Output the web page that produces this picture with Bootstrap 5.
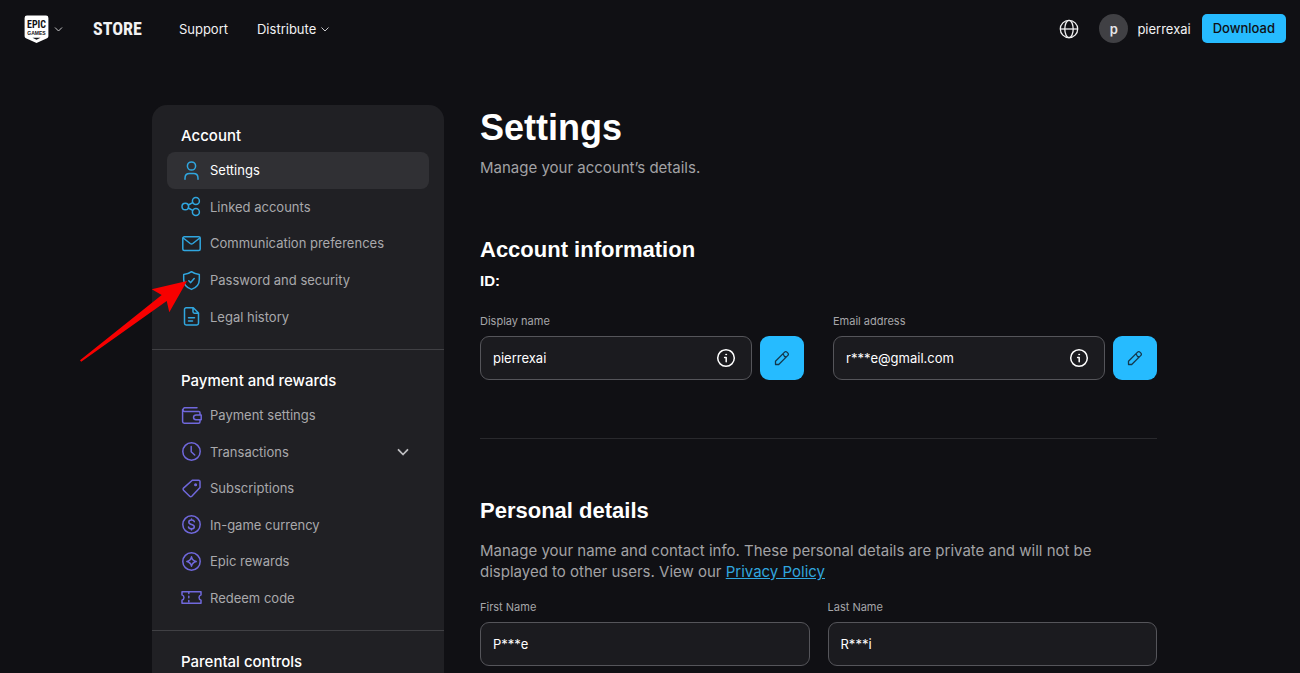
<!DOCTYPE html>
<html lang="en" data-bs-theme="dark">
<head>
<meta charset="utf-8">
<meta name="viewport" content="width=device-width, initial-scale=1">
<title>Account settings</title>
<link href="https://cdn.jsdelivr.net/npm/bootstrap@5.3.0/dist/css/bootstrap.min.css" rel="stylesheet">
<style>
  body { background: #101014; color: #fff; font-family: Inter, "Open Sans", sans-serif; font-size: 13px; line-height: 20px; }
  a { text-decoration: none; }
  svg { display: block; flex: none; }
  .topbar { padding: 13px 14px 13px 24px; min-height: 57px; }
  .topbar a, .topbar .menu-btn { color: #f2f2f3; }
  .menu-btn { background: none; border: 0; padding: 0; display: flex; align-items: center; }
  .brand-text { font: 700 18px/30px "Liberation Sans Narrow", "Roboto Condensed", "Liberation Sans", sans-serif; margin: 0 37px 0 29px; }
  .avatar { width: 29px; height: 29px; background: #404044; font-weight: 600; color: #e6e6e8; }
  .user-link { gap: 9px; margin: 0 11px 0 20px; }
  .btn-blue { background: #26bbff; color: #101014; border: 0; font-weight: 500; --bs-btn-hover-bg: #61cdff; --bs-btn-hover-color: #101014; }
  .btn-download { font-size: 13px; line-height: 19px; padding: 5px 11px; border-radius: 5px; }
  .shell { max-width: 1020px; padding: 48px 3px 0 12px; gap: 36px; }
  .side { width: 292px; background: #202024; border-radius: 15px 15px 0 0; }
  .side section { padding: 21px 15px 14px; }
  .side section + section { border-top: 1px solid #404044; }
  .side section:last-child { padding-bottom: 0; }
  .side h2 { font-size: 15px; line-height: 20px; font-weight: 500; margin: 0 0 6px; padding-left: 14px; }
  .side section:last-of-type { padding-bottom: 0; }
  .side section:last-of-type h2 { margin-bottom: 0; }
  .side ul { margin: 0; }
  .side .list-five { min-height: 183px; }
  .side .list-six { min-height: 219px; }
  .side li a { padding: 0 19px 0 14px; gap: 8px; border-radius: 8px; color: #a9a9ac; }
  .side li a.active { background: #303034; color: #fff; }
  .ic-blue { color: #30a6df; }
  .ic-violet { color: #7068dc; }
  .ic { width: 21px; height: 21px; fill: none; stroke: currentColor; stroke-width: 1.5; stroke-linecap: round; stroke-linejoin: round; }
  .pointer { left: -72px; top: 175px; pointer-events: none; }
  main { min-width: 0; }
  main h1, main h2, .id-line { font-family: "Liberation Sans", Arial, sans-serif; font-weight: 700; }
  main h1 { font-size: 36px; line-height: 46px; margin: 0 0 6px; }
  main h2 { font-size: 22px; line-height: 28px; margin: 0; }
  .id-line { font-size: 15px; line-height: 20px; margin: 7px 0 22px; }
  .copy { font-size: 15px; line-height: 21px; color: #a2a2a5; margin: 0; }
  .copy a { color: #30a6df; text-decoration: underline; }
  .field-label { display: block; font-size: 11px; line-height: 16px; color: #a6a6a9; margin-bottom: 7px; }
  .field { height: 44px; background: #1b1b1f; border: 1px solid #55555a; border-radius: 9px; padding: 0 15px 0 12px; }
  .field input { background: none; border: 0; outline: 0; color: #fff; padding: 0; width: 100%; min-width: 0; font-size: 13px; line-height: 20px; }
  .btn-edit { width: 44px; height: 44px; border-radius: 9px; padding: 0; }
  .gap-wide { gap: 29px; }
  .gap-mid { gap: 18px; }
  .rule { height: 1px; background: #29292d; margin: 58px 0 58px; }
  .intro { margin-bottom: 58px; }
  .details-copy { margin: 15px 0 17px; }
</style>
</head>
<body class="d-flex flex-column min-vh-100">
<header class="topbar d-flex align-items-center">
  <button class="menu-btn" type="button" aria-label="Epic Games menu">
    <svg width="25" height="28" viewBox="0 0 25 28"><path d="M3 0.5h19a2.4 2.4 0 0 1 2.4 2.4v17.8c0 1.6-.5 2.2-1.9 2.8L12.500 28 2.500 23.500C1.100 22.900.600 22.300.600 20.700V2.900A2.400 2.400 0 0 1 3 .5z" fill="#fff"/><path d="M8.500 22.800h8l-4 1.900z" fill="#101014"/><text x="12.500" y="13" text-anchor="middle" font-family="Liberation Sans Narrow, Roboto Condensed, Liberation Sans" font-weight="700" font-size="10" fill="#101014">EPIC</text><text x="12.500" y="20" text-anchor="middle" font-family="Liberation Sans" font-weight="700" font-size="5" fill="#101014">GAMES</text></svg>
    <svg class="ms-1" width="11" height="8" viewBox="0 0 11 8" fill="none" stroke="#c8c8ca"><path d="M2 2.500 5.500 6 9 2.500"/></svg>
  </button>
  <a class="brand-text" href="#">STORE</a>
  <nav class="d-flex align-items-center gap-wide" aria-label="Main">
    <a href="#">Support</a>
    <button class="menu-btn" type="button">Distribute<svg class="ms-1" width="10" height="8" viewBox="0 0 10 8" fill="none" stroke="#c8c8ca"><path d="M1.500 2.500 5 6l3.500-3.500"/></svg></button>
  </nav>
  <div class="d-flex align-items-center ms-auto">
    <button class="menu-btn" type="button" aria-label="Language"><svg width="20" height="20" viewBox="0 0 20 20" fill="none" stroke="#f2f2f3" stroke-width="1.300"><circle cx="10" cy="10" r="8.700"/><ellipse cx="10" cy="10" rx="4.200" ry="8.700"/><path d="M1.300 10h17.400"/></svg></button>
    <a class="user-link d-flex align-items-center" href="#"><span class="avatar rounded-circle d-flex align-items-center justify-content-center">p</span><span>pierrexai</span></a>
    <button class="btn btn-blue btn-download" type="button">Download</button>
  </div>
</header>

<div class="shell d-flex flex-grow-1 w-100 mx-auto">
  <aside class="side flex-shrink-0 position-relative">
    <section>
      <h2>Account</h2>
      <ul class="list-unstyled d-flex flex-column list-five">
        <li class="flex-fill d-flex"><a class="active d-flex align-items-center w-100" href="#"><svg class="ic ic-blue" viewBox="0 0 21 21"><circle cx="10.500" cy="6" r="4.100"/><path d="M4 19.200v-1c0-3 1.700-4.700 4.500-4.700h4c2.800 0 4.500 1.700 4.500 4.700v1"/></svg>Settings</a></li>
        <li class="flex-fill d-flex"><a class="d-flex align-items-center w-100" href="#"><svg class="ic ic-blue" viewBox="0 0 21 21"><circle cx="4.300" cy="10.500" r="3.300"/><circle cx="14.900" cy="5" r="3.500"/><circle cx="14.900" cy="16" r="3.500"/><path d="m7.300 9 4.400-2.400M7.300 12l4.400 2.400"/></svg>Linked accounts</a></li>
        <li class="flex-fill d-flex"><a class="d-flex align-items-center w-100" href="#"><svg class="ic ic-blue" viewBox="0 0 21 21"><rect x="1.800" y="3.800" width="17.400" height="13.600" rx="1.500"/><path d="m2.200 5 7 5.500c.900.600 1.700.600 2.600 0l7-5.500"/></svg>Communication preferences</a></li>
        <li class="flex-fill d-flex"><a class="d-flex align-items-center w-100" href="#"><svg class="ic ic-blue" viewBox="0 0 21 21"><path d="M10.500 1.700C8.300 3.500 5.600 4.300 2.700 4.500v5c0 4.800 3 8.300 7.800 9.900 4.800-1.600 7.800-5.100 7.800-9.900v-5c-2.900-.2-5.600-1-7.800-2.800z"/><path d="m7.800 10.800 1.900 1.800 3.500-4"/></svg>Password and security</a></li>
        <li class="flex-fill d-flex"><a class="d-flex align-items-center w-100" href="#"><svg class="ic ic-blue" viewBox="0 0 21 21"><path d="M12.300 1.800H5.200a1.700 1.700 0 0 0-1.700 1.700v13.800A1.700 1.700 0 0 0 5.200 19h10.600a1.700 1.700 0 0 0 1.700-1.700V7zM12 2v3.800c0 .9.500 1.400 1.400 1.400h4M7.500 11.800h6M7.500 15h4"/></svg>Legal history</a></li>
      </ul>
    </section>
    <section>
      <h2>Payment and rewards</h2>
      <ul class="list-unstyled d-flex flex-column list-six">
        <li class="flex-fill d-flex"><a class="d-flex align-items-center w-100" href="#"><svg class="ic ic-violet" viewBox="0 0 21 21"><path d="M16 2.800H3.500a1.900 1.900 0 0 0 0 3.700h14.200c.8 0 1.300.5 1.300 1.300v2M1.600 4.600v11.900c0 1 .7 1.700 1.700 1.700h14.200c1 0 1.500-.6 1.500-1.500v-1.500M15 9.900h5.200v4.900H15a2.450 2.450 0 0 1 0-4.900z"/></svg>Payment settings</a></li>
        <li class="flex-fill d-flex"><a class="d-flex align-items-center w-100" href="#"><svg class="ic ic-violet" viewBox="0 0 21 21"><circle cx="10.500" cy="10.500" r="8.700"/><path d="M10.200 5.500v5.300l3.500 3.200"/></svg>Transactions<svg class="ms-auto" width="14" height="14" viewBox="0 0 14 14" fill="none" stroke="#bdbdc0" stroke-width="1.800" stroke-linecap="round" stroke-linejoin="round"><path d="m2.500 4.800 4.500 4.700 4.500-4.700"/></svg></a></li>
        <li class="flex-fill d-flex"><a class="d-flex align-items-center w-100" href="#"><svg class="ic ic-violet" viewBox="0 0 21 21"><path d="M11.300 2.200h6.300c.8 0 1.400.6 1.400 1.400v6L10.800 18.300c-.7.700-1.500.700-2.100 0L2.500 12.200c-.6-.6-.6-1.400 0-2.100z"/><circle cx="14.600" cy="6.700" r=".8" fill="currentColor"/></svg>Subscriptions</a></li>
        <li class="flex-fill d-flex"><a class="d-flex align-items-center w-100" href="#"><svg class="ic ic-violet" viewBox="0 0 21 21"><circle cx="10.500" cy="10.500" r="8.700"/><path d="M13.300 7.700c-.2-1-1.300-1.600-2.800-1.600s-2.700.7-2.700 2.100c0 2.900 5.500 1.600 5.500 4.500 0 1.300-1.200 2.100-2.800 2.100s-2.800-.7-3-1.800M10.500 4.900v1.200M10.500 14.800V16"/></svg>In-game currency</a></li>
        <li class="flex-fill d-flex"><a class="d-flex align-items-center w-100" href="#"><svg class="ic ic-violet" viewBox="0 0 21 21"><circle cx="10.500" cy="10.500" r="8.700"/><path d="M10.500 5.800c.6 2.800 1.900 4.100 4.700 4.700-2.800.6-4.100 1.900-4.700 4.700-.6-2.800-1.900-4.100-4.700-4.700 2.800-.6 4.100-1.900 4.700-4.700z"/></svg>Epic rewards</a></li>
        <li class="flex-fill d-flex"><a class="d-flex align-items-center w-100" href="#"><svg class="ic ic-violet" viewBox="0 0 21 21"><path d="M1 4.700h19v3.200a2.700 2.700 0 0 0 0 5.200v3.200H1v-3.200a2.700 2.700 0 0 0 0-5.200z"/><path d="M7.800 5v11" stroke-dasharray="1.500 2.700"/></svg>Redeem code</a></li>
      </ul>
    </section>
    <section>
      <h2>Parental controls</h2>
    </section>
    <svg class="pointer position-absolute" width="108" height="84" viewBox="80 280 108 84" aria-hidden="true"><path d="M187 281 151.700 289.300 161.700 295 80 360.300 81.200 361.700 166.700 301 169.300 312.300z" fill="#f80000"/></svg>
  </aside>

  <main class="flex-grow-1">
    <h1>Settings</h1>
    <p class="copy intro">Manage your account’s details.</p>
    <h2>Account information</h2>
    <p class="id-line">ID:</p>
    <form>
      <div class="d-flex gap-wide">
        <div class="flex-fill">
          <label class="field-label" for="display">Display name</label>
          <div class="d-flex gap-2">
            <div class="field d-flex align-items-center flex-fill"><input id="display" type="text" value="pierrexai" readonly>
              <button class="menu-btn" type="button" aria-label="About display name"><svg width="20" height="20" viewBox="0 0 20 20" fill="none" stroke="#fff" stroke-width="1.500" stroke-linecap="round" stroke-linejoin="round"><circle cx="10" cy="10" r="8.300"/><path d="M8.600 9.500h1.600v4.300"/><circle cx="10.100" cy="6.500" r=".5" fill="#fff" stroke-width=".8"/></svg></button></div>
            <button class="btn btn-blue btn-edit d-flex align-items-center justify-content-center" type="button" aria-label="Edit display name"><svg width="18" height="18" viewBox="0 0 18 18" fill="none" stroke="#14384c" stroke-width="1.300" stroke-linejoin="round"><path d="M2.500 15.500v-3.200L11.600 3.100a1.600 1.600 0 0 1 2.300 0l1 1a1.600 1.600 0 0 1 0 2.300L5.700 15.500zM10 4.700 11.500 7.500 13.300 8"/></svg></button>
          </div>
        </div>
        <div class="flex-fill">
          <label class="field-label" for="email">Email address</label>
          <div class="d-flex gap-2">
            <div class="field d-flex align-items-center flex-fill"><input id="email" type="text" value="r***e@gmail.com" readonly>
              <button class="menu-btn" type="button" aria-label="About email address"><svg width="20" height="20" viewBox="0 0 20 20" fill="none" stroke="#fff" stroke-width="1.500" stroke-linecap="round" stroke-linejoin="round"><circle cx="10" cy="10" r="8.300"/><path d="M8.600 9.500h1.600v4.300"/><circle cx="10.100" cy="6.500" r=".5" fill="#fff" stroke-width=".8"/></svg></button></div>
            <button class="btn btn-blue btn-edit d-flex align-items-center justify-content-center" type="button" aria-label="Edit email address"><svg width="18" height="18" viewBox="0 0 18 18" fill="none" stroke="#14384c" stroke-width="1.300" stroke-linejoin="round"><path d="M2.500 15.500v-3.200L11.600 3.100a1.600 1.600 0 0 1 2.300 0l1 1a1.600 1.600 0 0 1 0 2.300L5.700 15.500zM10 4.700 11.500 7.500 13.300 8"/></svg></button>
          </div>
        </div>
      </div>
      <div class="rule"></div>
      <h2>Personal details</h2>
      <p class="copy details-copy">Manage your name and contact info. These personal details are private and will not be displayed to other users. View our <a href="#">Privacy Policy</a></p>
      <div class="d-flex gap-mid">
        <div class="flex-fill"><label class="field-label" for="first">First Name</label><div class="field d-flex align-items-center"><input id="first" type="text" value="P***e"></div></div>
        <div class="flex-fill"><label class="field-label" for="last">Last Name</label><div class="field d-flex align-items-center"><input id="last" type="text" value="R***i"></div></div>
      </div>
    </form>
  </main>
</div>
<script src="https://cdn.jsdelivr.net/npm/bootstrap@5.3.0/dist/js/bootstrap.bundle.min.js"></script>
</body>
</html>
